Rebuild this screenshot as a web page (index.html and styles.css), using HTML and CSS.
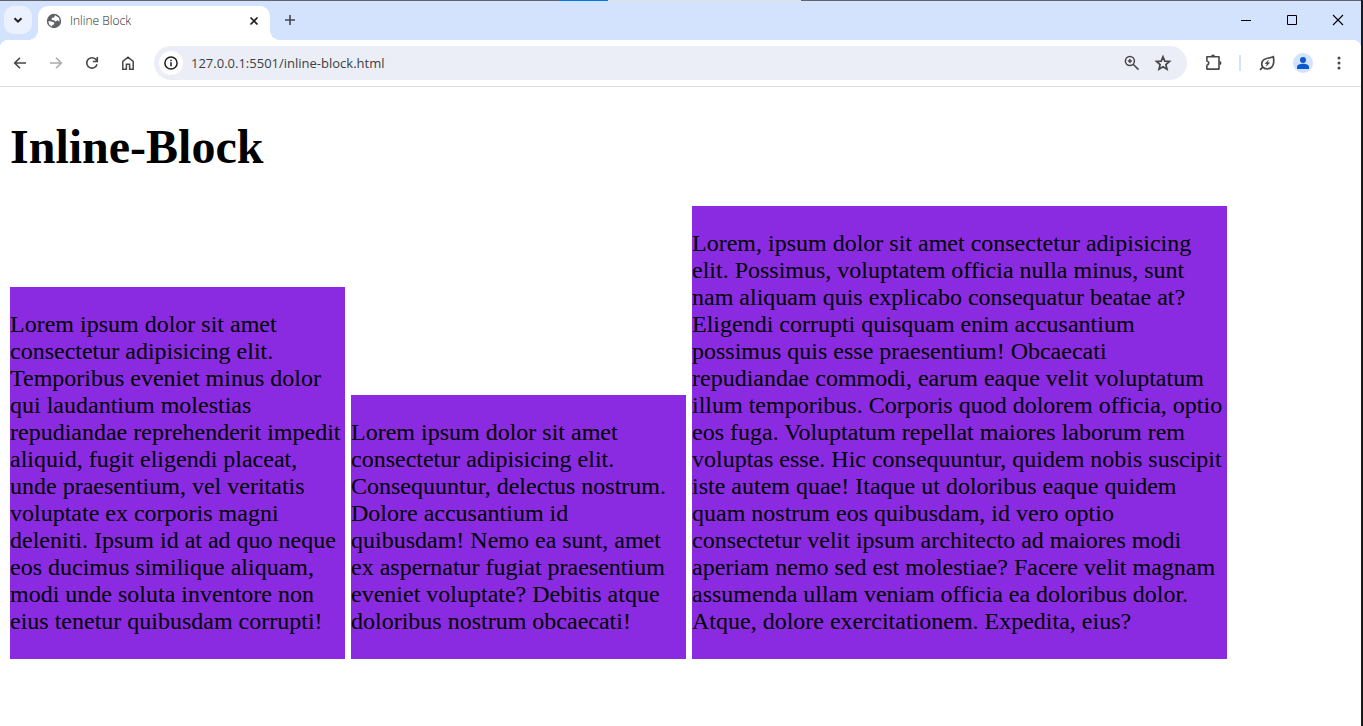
FILE: index.html
```html
<!DOCTYPE html>
<html lang="en">
<head>
<meta charset="utf-8">
<title>Inline Block</title>
<link rel="stylesheet" href="styles.css">
</head>
<body>
<div class="window">
  <div class="edge-line"><span class="edge-blue"></span><span class="edge-light"></span></div>
  <header class="tab-strip">
    <button class="tab-search" aria-label="Search tabs">
      <svg width="28" height="28" viewBox="0 0 28 28"><path d="M10.500 12.200l3.500 3.500 3.500-3.500" fill="none" stroke="#1f1f1f" stroke-width="2"/></svg>
    </button>
    <div class="tab">
      <svg class="favicon" width="16" height="16" viewBox="0 0 16 16"><circle cx="8" cy="8" r="7.200" fill="#5f6368"/><path d="M9 2.200 13.200 5 13.500 8.500 11 7.300 9.800 8.800 7.800 7.200 5.500 6.800 6.200 4.700 8.200 4.400z" fill="#fff"/><path d="M2.200 8.200 5.800 8.500 8.300 9.800 8 11.500 6.300 12.100 6 13.500 3.500 12z" fill="#fff"/></svg>
      <span class="tab-title">Inline Block</span>
      <button class="tab-close" aria-label="Close tab">
        <svg width="16" height="16" viewBox="0 0 16 16"><path d="M4.500 4.500l7 7M11.500 4.500l-7 7" stroke="#1f1f1f" stroke-width="1.700"/></svg>
      </button>
    </div>
    <button class="new-tab" aria-label="New tab">
      <svg width="20" height="20" viewBox="0 0 20 20"><path d="M10 5v10M5 10h10" stroke="#46474a" stroke-width="1.600"/></svg>
    </button>
    <div class="window-controls">
      <button aria-label="Minimize"><svg width="12" height="12" viewBox="0 0 12 12"><path d="M1 6.500h10" stroke="#000"/></svg></button>
      <button aria-label="Maximize"><svg width="12" height="12" viewBox="0 0 12 12"><path d="M1.500 1.500h9v9h-9z" fill="none" stroke="#000"/></svg></button>
      <button aria-label="Close"><svg width="12" height="12" viewBox="0 0 12 12"><path d="M1 1l10 10M11 1L1 11" stroke="#000" stroke-width="1.100"/></svg></button>
    </div>
  </header>
  <nav class="toolbar" aria-label="Browser toolbar">
    <div class="nav-buttons">
      <button aria-label="Back"><svg width="20" height="20" viewBox="0 0 20 20"><path d="M16 10H5M10 4.700L4.700 10l5.300 5.300" fill="none" stroke="#474747" stroke-width="1.600"/></svg></button>
      <button aria-label="Forward" disabled><svg width="20" height="20" viewBox="0 0 20 20"><path d="M4 10h11M10 4.700l5.300 5.300-5.300 5.300" fill="none" stroke="#ababab" stroke-width="1.600"/></svg></button>
      <button aria-label="Reload"><svg width="20" height="20" viewBox="0 0 20 20"><path d="M15 11.200A5.200 5.200 0 1 1 13.800 6.400L15 7.700" fill="none" stroke="#474747" stroke-width="1.600"/><path d="M15.300 4v4.500h-4.500" fill="none" stroke="#474747" stroke-width="1.600"/></svg></button>
      <button aria-label="Home"><svg width="20" height="20" viewBox="0 0 20 20"><path d="M4.800 16.200V8.300L10 4.200l5.200 4.100v7.900h-3.600v-4.900H8.400v4.900z" fill="none" stroke="#474747" stroke-width="1.500"/></svg></button>
    </div>
    <div class="omnibox">
      <button class="site-info" aria-label="View site information"><svg width="16" height="16" viewBox="0 0 16 16"><circle cx="8" cy="8" r="6.100" fill="none" stroke="#1f1f1f" stroke-width="1.500"/><path d="M8 7.200v4.100M8 4.700v1.500" stroke="#1f1f1f" stroke-width="1.500"/></svg></button>
      <input class="address" type="text" aria-label="Address" value="127.0.0.1:5501/inline-block.html">
      <button aria-label="Zoom"><svg width="18" height="18" viewBox="0 0 18 18"><circle cx="6.900" cy="7" r="4.500" fill="none" stroke="#474747" stroke-width="1.500"/><path d="M10.200 10.300l5.300 5.300M6.900 5v4M4.900 7h4" stroke="#474747" stroke-width="1.500"/></svg></button>
      <button aria-label="Bookmark this tab"><svg width="20" height="20" viewBox="0 0 20 20"><path d="M10 3.800l1.800 4.300 4.700.4-3.600 3.100 1.100 4.600-4-2.500-4 2.500 1.100-4.600-3.600-3.100 4.700-.4z" fill="none" stroke="#474747" stroke-width="1.700"/></svg></button>
    </div>
    <div class="actions">
      <button aria-label="Extensions"><svg width="20" height="20" viewBox="0 0 20 20"><path d="M3.900 3.800h12.100v12.300H3.900v-3.900c2.500-.5 2.500-3.700 0-4.200z" fill="none" stroke="#474747" stroke-width="1.600" stroke-linejoin="round"/><path d="M8 3.500a2 2 0 0 1 4 0zM16.500 8a2 2 0 0 1 0 4z" fill="#474747"/></svg></button>
      <span class="divider"></span>
      <button aria-label="Performance"><svg width="20" height="20" viewBox="0 0 20 20"><path d="M16.300 3.700c1.100 5.300.4 12-5.900 12.300-4.500.1-6.700-3.500-5.100-7.400C7 4.700 12 5.600 16.300 3.700zM3 16.900l2.800-2.700" fill="none" stroke="#474747" stroke-width="1.700"/><path d="M12 6.500L7.500 10.800h2.400l-1.200 3.200 4.600-4.500h-2.500z" fill="#474747"/></svg></button>
      <button class="profile" aria-label="Profile"><svg width="20" height="20" viewBox="0 0 20 20"><circle cx="10" cy="7" r="3" fill="#0b57d0"/><path d="M4 16v-2c0-2 3-3.200 6-3.200s6 1.200 6 3.200v2z" fill="#0b57d0"/></svg></button>
      <button aria-label="Menu"><svg width="20" height="20" viewBox="0 0 20 20" fill="#474747"><circle cx="10" cy="5" r="1.500"/><circle cx="10" cy="10" r="1.500"/><circle cx="10" cy="15" r="1.500"/></svg></button>
    </div>
  </nav>
  <main class="page">
    <h1>Inline-Block</h1>
    <div class="box"><p>Lorem ipsum dolor sit amet consectetur adipisicing elit. Temporibus eveniet minus dolor qui laudantium molestias repudiandae reprehenderit impedit aliquid, fugit eligendi placeat, unde praesentium, vel veritatis voluptate ex corporis magni deleniti. Ipsum id at ad quo neque eos ducimus similique aliquam, modi unde soluta inventore non eius tenetur quibusdam corrupti!</p></div>
    <div class="box"><p>Lorem ipsum dolor sit amet consectetur adipisicing elit. Consequuntur, delectus nostrum. Dolore accusantium id quibusdam! Nemo ea sunt, amet ex aspernatur fugiat praesentium eveniet voluptate? Debitis atque doloribus nostrum obcaecati!</p></div>
    <div class="box box-wide"><p>Lorem, ipsum dolor sit amet consectetur adipisicing elit. Possimus, voluptatem officia nulla minus, sunt nam aliquam quis explicabo consequatur beatae at? Eligendi corrupti quisquam enim accusantium possimus quis esse praesentium! Obcaecati repudiandae commodi, earum eaque velit voluptatum illum temporibus. Corporis quod dolorem officia, optio eos fuga. Voluptatum repellat maiores laborum rem voluptas esse. Hic consequuntur, quidem nobis suscipit iste autem quae! Itaque ut doloribus eaque quidem quam nostrum eos quibusdam, id vero optio consectetur velit ipsum architecto ad maiores modi aperiam nemo sed est molestiae? Facere velit magnam assumenda ullam veniam officia ea doloribus dolor. Atque, dolore exercitationem. Expedita, eius?</p></div>
  </main>
</div>
</body>
</html>
```
FILE: styles.css
```css
* { box-sizing: border-box; }

body {
  margin: 0;
  background: #fff;
  font-family: "Open Sans", "Noto Sans", sans-serif;
}

.window {
  min-height: 100vh;
  border-right: 2px solid #1a1a1a;
}

button {
  display: flex;
  align-items: center;
  justify-content: center;
  flex: none;
  padding: 0;
  border: 0;
  background: none;
}

.edge-line {
  display: flex;
  height: 1px;
  padding-left: 560px;
  background: #63636f;
}
.edge-blue { width: 48px; background: #0078d7; }
.edge-light { width: 193px; background: #e1e1e1; }

.tab-strip {
  display: flex;
  height: 39px;
  padding: 5px 0 0 4px;
  background: #d3e2fd;
}
.tab-search {
  width: 28px;
  height: 28px;
  border-radius: 10px;
  background: #ebf1fe;
}
.tab {
  position: relative;
  display: flex;
  align-items: center;
  gap: 8px;
  width: 232px;
  margin-left: 6px;
  padding: 0 8px 5px 8px;
  border-radius: 10px 10px 0 0;
  background: #fff;
}
.tab::before,
.tab::after {
  content: "";
  position: absolute;
  bottom: 0;
  width: 10px;
  height: 10px;
}
.tab::before {
  right: 100%;
  background: radial-gradient(circle at 0 0, transparent 10px, #fff 10px);
}
.tab::after {
  left: 100%;
  background: radial-gradient(circle at 100% 0, transparent 10px, #fff 10px);
}
.tab-title {
  flex: 1;
  font-size: 12px;
  font-weight: 300;
  line-height: 16px;
  color: #1f1f1f;
}
.new-tab { width: 20px; height: 28px; margin-left: 10px; }
.window-controls { display: flex; margin-left: auto; }
.window-controls button { width: 46px; height: 28px; }

.toolbar {
  display: flex;
  align-items: center;
  height: 47px;
  padding: 0 12px 0 10px;
  border-bottom: 1px solid #e1e1e1;
  background:
    radial-gradient(circle at 0 100%, #fff 8px, #d3e2fd 8px) top right / 8px 8px no-repeat,
    radial-gradient(circle at 100% 100%, #fff 8px, #d3e2fd 8px) top left / 8px 8px no-repeat,
    #fff;
}
.nav-buttons { display: flex; gap: 16px; }
.omnibox {
  display: flex;
  flex: 1;
  align-items: center;
  gap: 12px;
  height: 34px;
  margin-left: 16px;
  padding: 0 14px 0 5px;
  border-radius: 17px;
  background: #ebeef7;
}
.site-info {
  width: 24px;
  height: 24px;
  border-radius: 50%;
  background: #fff;
}
.address {
  flex: 1;
  min-width: 0;
  margin-left: -4px;
  padding: 0;
  border: 0;
  outline: 0;
  background: none;
  font-family: "Open Sans", "Noto Sans", sans-serif;
  font-size: 13px;
  line-height: 20px;
  color: #3c3e42;
}
.actions { display: flex; align-items: center; gap: 16px; margin-left: 16px; }
.divider { width: 2px; height: 16px; background: #d3e2fd; }
.profile { border-radius: 50%; background: #d3e2fd; }

.page {
  padding: 33px 10px 24px;
  font-family: "Liberation Serif", "Times New Roman", serif;
  font-size: 24px;
  line-height: 27px;
  color: #000;
}
.page h1 {
  margin: 0 0 33px;
  font-size: 48px;
  line-height: 53px;
}
.box {
  display: inline-block;
  width: 335px;
  background: blueviolet;
}
.box-wide { width: 535px; }
.box p { margin: 24px 0; }
```
